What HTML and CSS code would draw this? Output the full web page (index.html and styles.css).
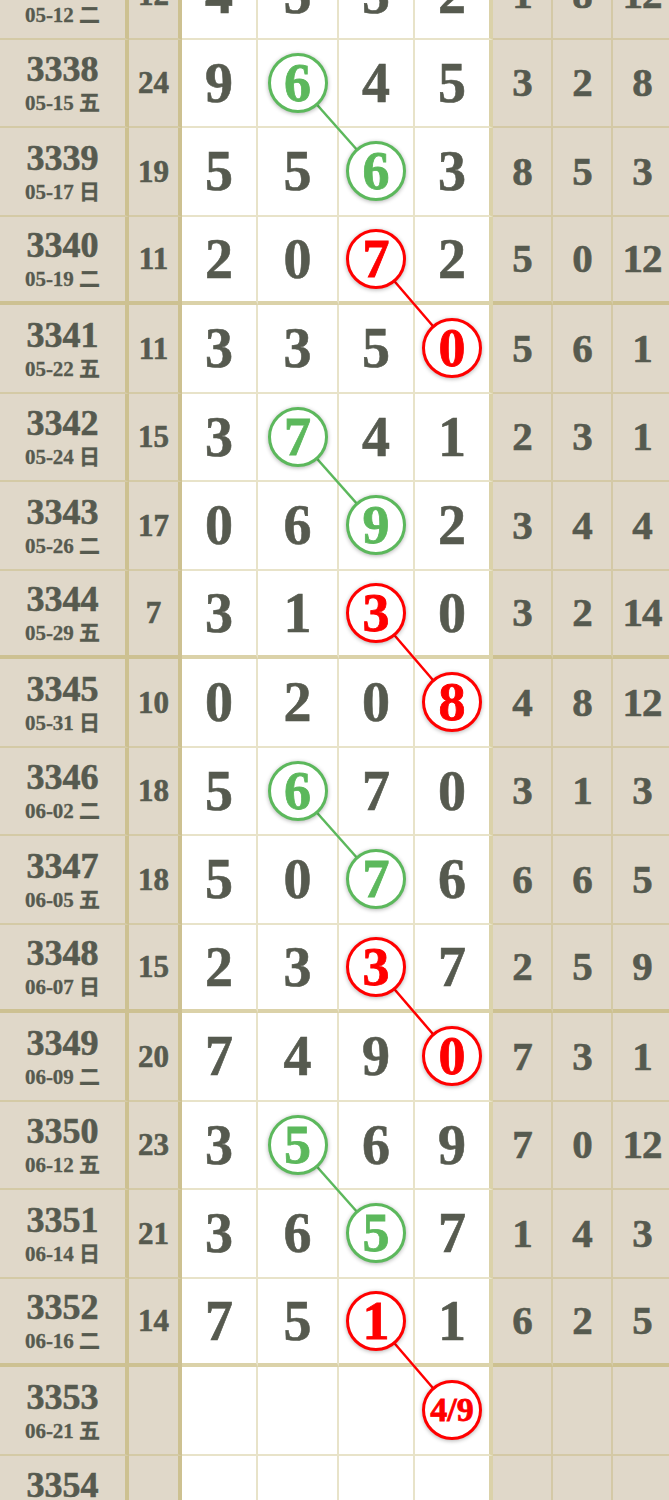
FILE: index.html
```html
<!DOCTYPE html>
<html lang="zh">
<head>
  <meta charset="UTF-8" />
  <meta name="viewport" content="width=device-width, initial-scale=1.0" />
  <title>走势图</title>
  <link rel="stylesheet" href="styles.css">
</head>
<body>
  <div class="chart">
    <svg class="links" width="673" height="1600">
      <line class="lg" x1="297.5" y1="131.75" x2="376" y2="220.25" />
      <line class="lr" x1="376" y1="308.75" x2="452" y2="397.25" />
      <line class="lg" x1="297.5" y1="485.75" x2="376" y2="574.25" />
      <line class="lr" x1="376" y1="662.75" x2="452" y2="751.25" />
      <line class="lg" x1="297.5" y1="839.75" x2="376" y2="928.25" />
      <line class="lr" x1="376" y1="1016.75" x2="452" y2="1105.25" />
      <line class="lg" x1="297.5" y1="1193.75" x2="376" y2="1282.25" />
      <line class="lr" x1="376" y1="1370.75" x2="452" y2="1459.25" />
    </svg>

    <div class="row">
      <div class="qi"><b>3337</b><span>05-12 二</span></div><div class="he">12</div>
      <div class="n">4</div><div class="n">5</div><div class="n">5</div><div class="n last">2</div>
      <div class="m">1</div><div class="m">8</div><div class="m">12</div>
    </div>
    <div class="row">
      <div class="qi"><b>3338</b><span>05-15 五</span></div><div class="he">24</div>
      <div class="n">9</div><div class="n"><i class="ball g">6</i></div><div class="n">4</div><div class="n last">5</div>
      <div class="m">3</div><div class="m">2</div><div class="m">8</div>
    </div>
    <div class="row">
      <div class="qi"><b>3339</b><span>05-17 日</span></div><div class="he">19</div>
      <div class="n">5</div><div class="n">5</div><div class="n"><i class="ball g">6</i></div><div class="n last">3</div>
      <div class="m">8</div><div class="m">5</div><div class="m">3</div>
    </div>
    <div class="row sep">
      <div class="qi"><b>3340</b><span>05-19 二</span></div><div class="he">11</div>
      <div class="n">2</div><div class="n">0</div><div class="n"><i class="ball r">7</i></div><div class="n last">2</div>
      <div class="m">5</div><div class="m">0</div><div class="m">12</div>
    </div>
    <div class="row">
      <div class="qi"><b>3341</b><span>05-22 五</span></div><div class="he">11</div>
      <div class="n">3</div><div class="n">3</div><div class="n">5</div><div class="n last"><i class="ball r">0</i></div>
      <div class="m">5</div><div class="m">6</div><div class="m">1</div>
    </div>
    <div class="row">
      <div class="qi"><b>3342</b><span>05-24 日</span></div><div class="he">15</div>
      <div class="n">3</div><div class="n"><i class="ball g">7</i></div><div class="n">4</div><div class="n last">1</div>
      <div class="m">2</div><div class="m">3</div><div class="m">1</div>
    </div>
    <div class="row">
      <div class="qi"><b>3343</b><span>05-26 二</span></div><div class="he">17</div>
      <div class="n">0</div><div class="n">6</div><div class="n"><i class="ball g">9</i></div><div class="n last">2</div>
      <div class="m">3</div><div class="m">4</div><div class="m">4</div>
    </div>
    <div class="row sep">
      <div class="qi"><b>3344</b><span>05-29 五</span></div><div class="he">7</div>
      <div class="n">3</div><div class="n">1</div><div class="n"><i class="ball r">3</i></div><div class="n last">0</div>
      <div class="m">3</div><div class="m">2</div><div class="m">14</div>
    </div>
    <div class="row">
      <div class="qi"><b>3345</b><span>05-31 日</span></div><div class="he">10</div>
      <div class="n">0</div><div class="n">2</div><div class="n">0</div><div class="n last"><i class="ball r">8</i></div>
      <div class="m">4</div><div class="m">8</div><div class="m">12</div>
    </div>
    <div class="row">
      <div class="qi"><b>3346</b><span>06-02 二</span></div><div class="he">18</div>
      <div class="n">5</div><div class="n"><i class="ball g">6</i></div><div class="n">7</div><div class="n last">0</div>
      <div class="m">3</div><div class="m">1</div><div class="m">3</div>
    </div>
    <div class="row">
      <div class="qi"><b>3347</b><span>06-05 五</span></div><div class="he">18</div>
      <div class="n">5</div><div class="n">0</div><div class="n"><i class="ball g">7</i></div><div class="n last">6</div>
      <div class="m">6</div><div class="m">6</div><div class="m">5</div>
    </div>
    <div class="row sep">
      <div class="qi"><b>3348</b><span>06-07 日</span></div><div class="he">15</div>
      <div class="n">2</div><div class="n">3</div><div class="n"><i class="ball r">3</i></div><div class="n last">7</div>
      <div class="m">2</div><div class="m">5</div><div class="m">9</div>
    </div>
    <div class="row">
      <div class="qi"><b>3349</b><span>06-09 二</span></div><div class="he">20</div>
      <div class="n">7</div><div class="n">4</div><div class="n">9</div><div class="n last"><i class="ball r">0</i></div>
      <div class="m">7</div><div class="m">3</div><div class="m">1</div>
    </div>
    <div class="row">
      <div class="qi"><b>3350</b><span>06-12 五</span></div><div class="he">23</div>
      <div class="n">3</div><div class="n"><i class="ball g">5</i></div><div class="n">6</div><div class="n last">9</div>
      <div class="m">7</div><div class="m">0</div><div class="m">12</div>
    </div>
    <div class="row">
      <div class="qi"><b>3351</b><span>06-14 日</span></div><div class="he">21</div>
      <div class="n">3</div><div class="n">6</div><div class="n"><i class="ball g">5</i></div><div class="n last">7</div>
      <div class="m">1</div><div class="m">4</div><div class="m">3</div>
    </div>
    <div class="row sep">
      <div class="qi"><b>3352</b><span>06-16 二</span></div><div class="he">14</div>
      <div class="n">7</div><div class="n">5</div><div class="n"><i class="ball r">1</i></div><div class="n last">1</div>
      <div class="m">6</div><div class="m">2</div><div class="m">5</div>
    </div>
    <div class="row">
      <div class="qi"><b>3353</b><span>06-21 五</span></div><div class="he"></div>
      <div class="n"></div><div class="n"></div><div class="n"></div><div class="n last"><i class="ball r small">4/9</i></div>
      <div class="m"></div><div class="m"></div><div class="m"></div>
    </div>
    <div class="row">
      <div class="qi"><b>3354</b><span>06-23 日</span></div><div class="he"></div>
      <div class="n"></div><div class="n"></div><div class="n"></div><div class="n last"></div>
      <div class="m"></div><div class="m"></div><div class="m"></div>
    </div>
  </div>
</body>
</html>
```

FILE: styles.css
```css
body {
  margin: 0;
  background: #fff;
  overflow: hidden;
  font-family: "Liberation Serif", "Noto Sans CJK SC", serif;
  color: #565a4f;
}
.chart {
  position: relative;
  width: 673px;
  margin-top: -49px;
}
.links {
  position: absolute;
  top: 0;
  left: 0;
  z-index: 1;
  pointer-events: none;
}
.links line {
  stroke-width: 2.5;
}
.links .lg {
  stroke: #5cb85c;
}
.links .lr {
  stroke: #f00;
}
.row {
  display: grid;
  grid-template-columns: 129px 53px 76px 81px 76px 78px 60px 60px 60px;
  height: 88.5px;
}
.row > div {
  box-sizing: border-box;
  display: flex;
  align-items: center;
  justify-content: center;
  font-weight: bold;
  line-height: 1;
  -webkit-text-stroke: 0.6px currentColor;
  border-right: 2px solid rgba(190,175,100,0.35);
  border-bottom: 2px solid rgba(190,175,100,0.35);
}
.row.sep > div {
  border-bottom: 4px solid rgba(190,175,100,0.55);
}
.qi, .he, .m {
  background: #e0d8c9;
}
.qi {
  flex-direction: column;
  border-right: 4px solid rgba(190,175,100,0.55) !important;
}
.qi b {
  font-size: 36px;
}
.qi span {
  margin-top: 6px;
  font-size: 21px;
  -webkit-text-stroke: 0.3px currentColor;
}
.he {
  font-size: 31px;
  border-right: 4px solid rgba(190,175,100,0.55) !important;
}
.n {
  background: #fff;
  font-size: 56px;
}
.n.last {
  border-right: 4px solid rgba(190,175,100,0.55) !important;
}
.m {
  font-size: 41px;
  letter-spacing: -1px;
}
.ball {
  position: relative;
  z-index: 2;
  box-sizing: border-box;
  width: 60px;
  height: 60px;
  border-radius: 50%;
  border: 3px solid;
  background: #fff;
  display: flex;
  align-items: center;
  justify-content: center;
  font-style: normal;
  font-size: 54px;
  letter-spacing: 0;
  -webkit-text-stroke: 0.8px currentColor;
  box-shadow: 0 1px 4px rgba(0,0,0,0.3);
}
.ball.g {
  color: #5cb85c;
  border-color: #5cb85c;
}
.ball.r {
  color: #f00;
  border-color: #f00;
}
.ball.small {
  font-size: 34px;
}
```
